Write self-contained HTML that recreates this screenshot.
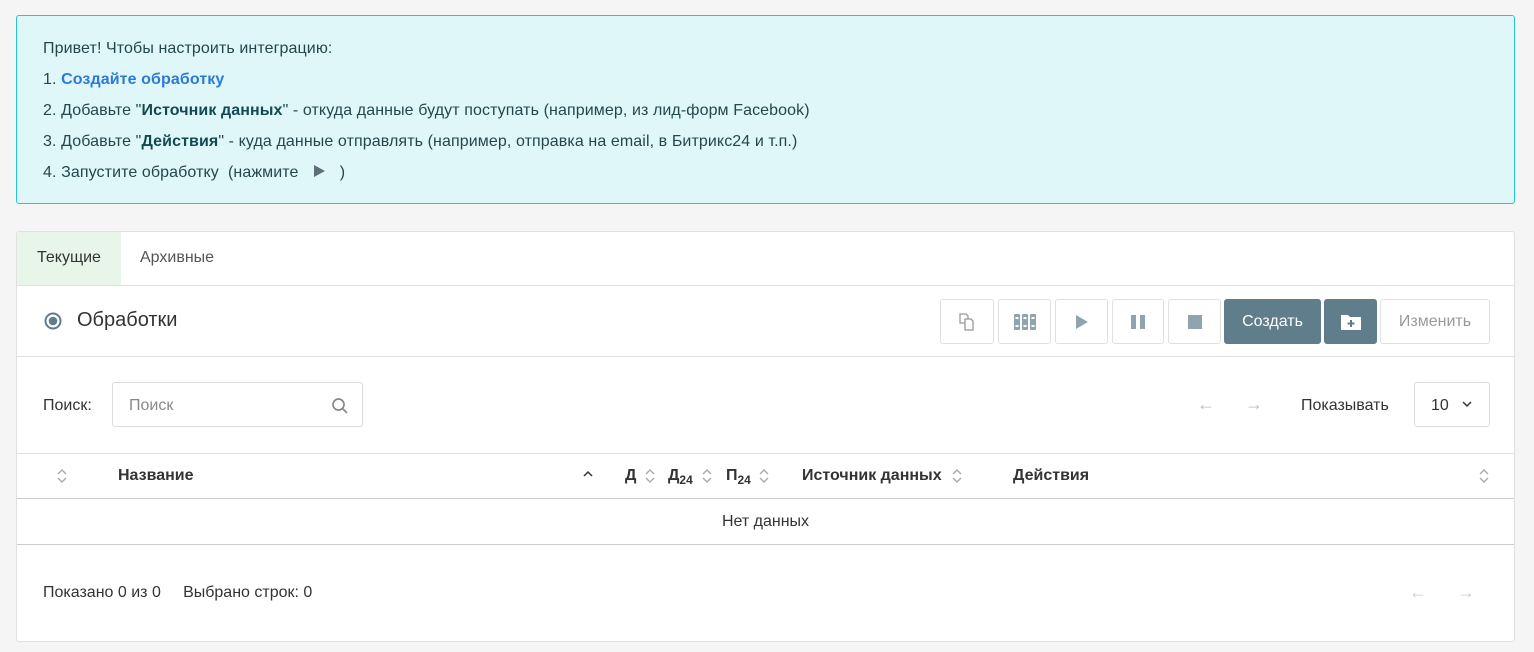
<!DOCTYPE html>
<html><head><meta charset="utf-8"><style>
*{box-sizing:border-box;margin:0;padding:0}
body{width:1534px;height:652px;background:#f5f5f5;font-family:"Liberation Sans",sans-serif;color:#333;font-size:16px;position:relative;overflow:hidden}
.a{position:absolute;white-space:nowrap}
.banner{position:absolute;left:16px;top:15px;width:1499px;height:189px;background:#e0f7fa;border:1px solid #26c6da;border-radius:3px;color:#24474b;font-size:16px}
.banner div{position:absolute;left:26px;letter-spacing:0.1px}
.panel{position:absolute;left:16px;top:231px;width:1499px;height:411px;background:#fff;border:1px solid #e0e0e0;border-radius:3px}
.hl{position:absolute;left:0;width:100%;height:1px;background:#e0e0e0}
.btn{position:absolute;top:67px;height:45px;border:1px solid #e0e0e0;border-radius:3px;background:#fff;display:flex;align-items:center;justify-content:center;color:#999}
.dk{background:#607d8b;border-color:#607d8b;color:#fff}
.s{display:inline-block;vertical-align:-3px}
</style></head><body>
<svg width="0" height="0" style="position:absolute"><defs><symbol id="srt" viewBox="0 0 12 18"><path d="M2 7l4-4 4 4M2 11l4 4 4-4" fill="none" stroke="#aaa" stroke-width="1.4"/></symbol></defs></svg>
<div class="banner">
<div style="top:24px">Привет! Чтобы настроить интеграцию:</div>
<div style="top:55px">1. <b style="color:#2d7ad6">Создайте обработку</b></div>
<div style="top:86px">2. Добавьте "<b style="color:#124a4f">Источник данных</b>" - откуда данные будут поступать (например, из лид-форм Facebook)</div>
<div style="top:117px">3. Добавьте "<b style="color:#124a4f">Действия</b>" - куда данные отправлять (например, отправка на email, в Битрикс24 и т.п.)</div>
<div style="top:148px">4. Запустите обработку &nbsp;(нажмите &nbsp;&nbsp;<svg width="14" height="14" viewBox="0 0 14 14" style="vertical-align:-1px"><path d="M2 1L13 7L2 13Z" fill="#5f6f7a"/></svg>&nbsp;&nbsp; )</div>
</div>
<div class="panel">
<div class="a" style="left:0;top:0;width:104px;height:53px;background:#e8f5e9"></div>
<div class="a" style="left:20px;top:17px;color:#333">Текущие</div>
<div class="a" style="left:123px;top:17px;color:#555">Архивные</div>
<div class="hl" style="top:53px"></div>
<svg class="a" style="left:27px;top:80px" width="18" height="18"><circle cx="9" cy="9" r="7.5" fill="none" stroke="#607d8b" stroke-width="2"/><circle cx="9" cy="9" r="4.3" fill="#607d8b"/></svg>
<div class="a" style="left:60px;top:77px;font-size:20px;color:#333">Обработки</div>
<div class="btn" style="left:923px;width:54px"><svg width="22" height="22" viewBox="0 0 22 22" fill="none" stroke="#999" stroke-width="1.3"><path d="M4 3h6l2 2v7H4z"/><path d="M9 8h6l2 2v9H9z" fill="#fff"/></svg></div>
<div class="btn" style="left:981px;width:53px"><svg width="24" height="20" viewBox="0 0 24 20"><g fill="#90a4ae"><rect x="1" y="2" width="6" height="16" rx="1"/><rect x="9" y="2" width="6" height="16" rx="1"/><rect x="17" y="2" width="6" height="16" rx="1"/></g><g fill="#fff"><rect x="2.5" y="5" width="3" height="2"/><rect x="10.5" y="5" width="3" height="2"/><rect x="18.5" y="5" width="3" height="2"/><rect x="2.5" y="13" width="3" height="2"/><rect x="10.5" y="13" width="3" height="2"/><rect x="18.5" y="13" width="3" height="2"/></g></svg></div>
<div class="btn" style="left:1038px;width:53px"><svg width="14" height="16"><path d="M1 1L13 8L1 15Z" fill="#90a4ae"/></svg></div>
<div class="btn" style="left:1095px;width:52px"><svg width="16" height="16"><rect x="1" y="1" width="5" height="14" fill="#90a4ae"/><rect x="10" y="1" width="5" height="14" fill="#90a4ae"/></svg></div>
<div class="btn" style="left:1151px;width:53px"><svg width="16" height="16"><rect x="1" y="1" width="14" height="14" fill="#90a4ae"/></svg></div>
<div class="btn dk" style="left:1207px;width:97px;font-size:16px">Создать</div>
<div class="btn dk" style="left:1307px;width:53px"><svg width="22" height="18" viewBox="0 0 22 18"><path d="M1 2h7l2 2h11v13H1z" fill="#fff"/><path d="M11 7v7M7.5 10.5h7" stroke="#607d8b" stroke-width="2"/></svg></div>
<div class="btn" style="left:1363px;width:110px;font-size:16px;color:#999">Изменить</div>
<div class="hl" style="top:124px"></div>
<div class="a" style="left:26px;top:165px">Поиск:</div>
<div class="a" style="left:95px;top:150px;width:251px;height:45px;border:1px solid #ddd;border-radius:3px"></div>
<div class="a" style="left:112px;top:165px;color:#888">Поиск</div>
<svg class="a" style="left:314px;top:165px" width="18" height="18" fill="none" stroke="#888" stroke-width="1.7"><circle cx="7.5" cy="7.5" r="5.5"/><path d="M11.5 11.5L16 16"/></svg>
<div class="a" style="left:1180px;top:162px;color:#bbb;font-size:18px">←</div>
<div class="a" style="left:1228px;top:162px;color:#bbb;font-size:18px">→</div>
<div class="a" style="left:1284px;top:165px">Показывать</div>
<div class="a" style="left:1397px;top:150px;width:76px;height:45px;border:1px solid #ddd;border-radius:3px"></div>
<div class="a" style="left:1414px;top:165px">10</div>
<svg class="a" style="left:1445px;top:168px" width="10" height="8" fill="none" stroke="#333" stroke-width="1.5"><path d="M1 2l4 4 4-4"/></svg>
<div class="hl" style="top:221px"></div>
<svg class="a" style="left:39px;top:235px" width="12" height="18"><use href="#srt"/></svg>
<div class="a" style="left:101px;top:235px;font-weight:bold">Название</div>
<svg class="a" style="left:566px;top:238px" width="10" height="8" fill="none" stroke="#333" stroke-width="1.5"><path d="M1 6l4-4 4 4"/></svg>
<div class="a" style="left:608px;top:235px;font-weight:bold">Д</div>
<svg class="a" style="left:627px;top:235px" width="12" height="18"><use href="#srt"/></svg>
<div class="a" style="left:651px;top:235px;font-weight:bold">Д<sub style="font-size:12px">24</sub></div>
<svg class="a" style="left:684px;top:235px" width="12" height="18"><use href="#srt"/></svg>
<div class="a" style="left:709px;top:235px;font-weight:bold">П<sub style="font-size:12px">24</sub></div>
<svg class="a" style="left:741px;top:235px" width="12" height="18"><use href="#srt"/></svg>
<div class="a" style="left:785px;top:235px;font-weight:bold">Источник данных</div>
<svg class="a" style="left:934px;top:235px" width="12" height="18"><use href="#srt"/></svg>
<div class="a" style="left:996px;top:235px;font-weight:bold">Действия</div>
<svg class="a" style="left:1461px;top:235px" width="12" height="18"><use href="#srt"/></svg>
<div class="hl" style="top:266px;background:#ccc"></div>
<div class="a" style="left:0;width:100%;top:281px;text-align:center">Нет данных</div>
<div class="hl" style="top:312px;background:#ccc"></div>
<div class="a" style="left:26px;top:352px">Показано 0 из 0 &nbsp;&nbsp;&nbsp;&nbsp;Выбрано строк: 0</div>
<div class="a" style="left:1392px;top:350px;color:#ccc;font-size:18px">←</div>
<div class="a" style="left:1440px;top:350px;color:#ccc;font-size:18px">→</div>
</div>
</body></html>
